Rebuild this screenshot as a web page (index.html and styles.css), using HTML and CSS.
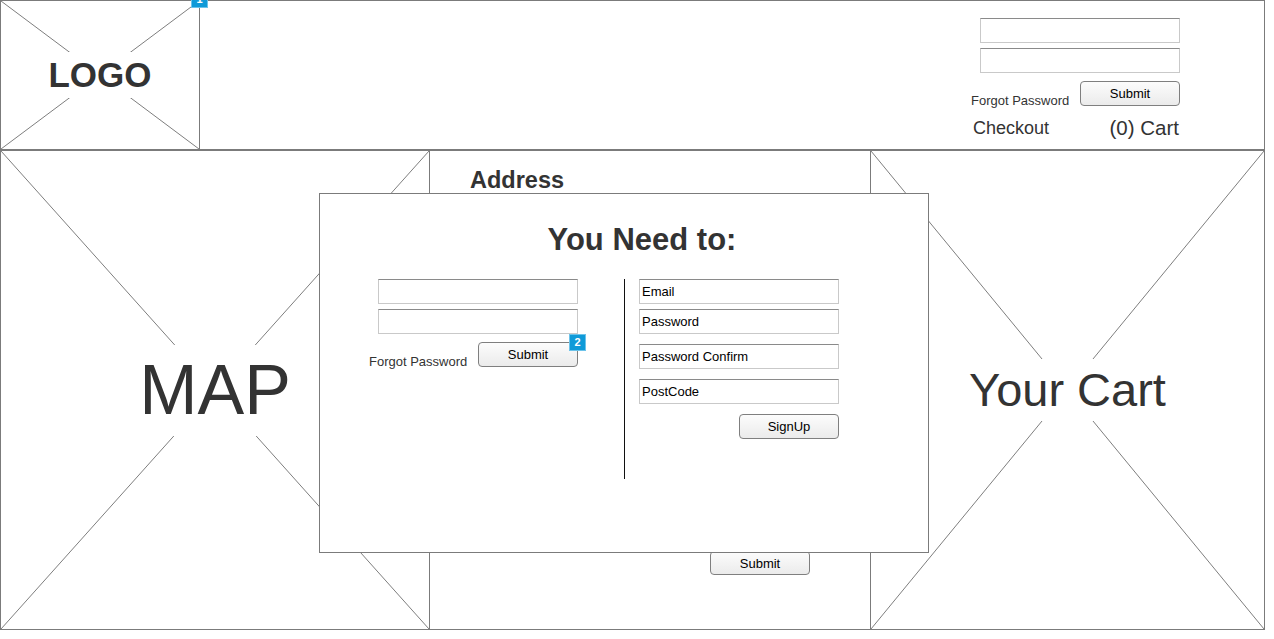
FILE: index.html
```html
<!DOCTYPE html>
<html lang="en">
<head>
<meta charset="utf-8">
<title>Wireframe</title>
<link rel="stylesheet" href="styles.css">
</head>
<body>
<div class="page">
  <header class="top">
    <div class="ph logo-box">
      <svg class="ph-x" xmlns="http://www.w3.org/2000/svg"><line x1="0" y1="0" x2="100%" y2="100%"/><line x1="100%" y1="0" x2="0" y2="100%"/></svg>
      <span class="ph-label logo-label">LOGO</span>
      <span class="badge badge-logo">1</span>
    </div>
    <div class="login">
      <div class="field"></div>
      <div class="field"></div>
      <div class="login-row">
        <span class="forgot">Forgot Password</span>
        <button class="btn">Submit</button>
      </div>
      <div class="links">
        <span class="checkout">Checkout</span>
        <span class="cart-link">(0) Cart</span>
      </div>
    </div>
  </header>

  <main class="content">
    <div class="ph map-box">
      <svg class="ph-x" xmlns="http://www.w3.org/2000/svg"><line x1="0" y1="0" x2="100%" y2="100%"/><line x1="100%" y1="0" x2="0" y2="100%"/></svg>
      <span class="ph-label map-label">MAP</span>
    </div>
    <section class="address">
      <h2 class="address-title">Address</h2>
      <button class="btn address-submit">Submit</button>
    </section>
    <div class="ph cart-box">
      <svg class="ph-x" xmlns="http://www.w3.org/2000/svg"><line x1="0" y1="0" x2="100%" y2="100%"/><line x1="100%" y1="0" x2="0" y2="100%"/></svg>
      <span class="ph-label cart-label">Your Cart</span>
    </div>
  </main>

  <div class="modal">
    <h1 class="modal-title">You Need to:</h1>
    <div class="modal-body">
      <div class="login login-modal">
        <div class="field"></div>
        <div class="field"></div>
        <div class="login-row">
          <span class="forgot">Forgot Password</span>
          <button class="btn btn-badged">Submit<span class="badge badge-btn">2</span></button>
        </div>
      </div>
      <div class="divider"></div>
      <div class="signup">
        <div class="field">Email</div>
        <div class="field">Password</div>
        <div class="field gap">Password Confirm</div>
        <div class="field gap">PostCode</div>
        <button class="btn signup-btn">SignUp</button>
      </div>
    </div>
  </div>
</div>
</body>
</html>
```

FILE: styles.css
```css
* { box-sizing: border-box; }

body {
  margin: 0;
  background: #fff;
  font-family: "Liberation Sans", Arial, sans-serif;
  color: #333;
}

.page {
  position: relative;
  width: 1265px;
  height: 630px;
}

/* ---------- header ---------- */
.top {
  display: flex;
  justify-content: space-between;
  height: 150px;
  border: 1px solid #7b7b7b;
}

.ph {
  position: relative;
  display: flex;
  align-items: center;
  justify-content: center;
}

.ph-x {
  position: absolute;
  inset: 0;
  width: 100%;
  height: 100%;
}

.ph-x line {
  stroke: #7e7e7e;
  stroke-width: 1;
}

.ph-label {
  position: relative;
  background: #fff;
  color: #333;
  line-height: 1.3;
}

.logo-box {
  width: 199px;
  border-right: 1px solid #7b7b7b;
}

.logo-label {
  font-size: 35px;
  font-weight: bold;
}

.badge {
  position: absolute;
  width: 17px;
  height: 17px;
  background: #0f9ad8;
  border: 1px solid #6cc3ea;
  color: #fff;
  font-size: 11px;
  font-weight: bold;
  line-height: 15px;
  text-align: center;
}

.badge-logo {
  top: -10px;
  right: -9px;
}

/* login block */
.login {
  display: flex;
  flex-direction: column;
  align-items: flex-end;
  width: 209px;
  margin-right: 84px;
  padding-top: 17px;
}

.field {
  width: 200px;
  height: 25px;
  border: 1px solid #c9c9c9;
  border-top-color: #8a8a8a;
  background: #fff;
  font-size: 13px;
  line-height: 23px;
  color: #000;
  padding-left: 2px;
}

.field + .field { margin-top: 5px; }
.field.gap { margin-top: 10px; }

.login-row {
  display: flex;
  align-items: flex-end;
  justify-content: space-between;
  width: 100%;
  margin-top: 8px;
}

.forgot {
  font-size: 13px;
  line-height: 16px;
  margin-bottom: -3px;
  color: #333;
}

.btn {
  position: relative;
  width: 100px;
  height: 25px;
  padding: 0;
  border: 1px solid #7f7f7f;
  border-radius: 4px;
  background: linear-gradient(#fcfcfc, #ebebeb);
  font-family: "Liberation Sans", Arial, sans-serif;
  font-size: 13px;
  color: #000;
}

.links {
  display: flex;
  align-items: center;
  justify-content: space-between;
  width: 100%;
  margin-top: 11px;
  padding-left: 2px;
}

.checkout {
  font-size: 18px;
  line-height: 22px;
}

.cart-link {
  font-size: 20.5px;
  line-height: 22px;
  margin-right: 1px;
}

/* ---------- content ---------- */
.content {
  display: flex;
  height: 480px;
}

.content > * {
  height: 480px;
  border: 1px solid #7b7b7b;
}

.map-box { width: 430px; }

.map-label { font-size: 70px; }

.address {
  width: 442px;
  margin-left: -1px;
  padding-left: 40px;
  display: flex;
  flex-direction: column;
  align-items: flex-start;
}

.address-title {
  margin: 16px 0 0;
  font-size: 23.5px;
  line-height: 26px;
  font-weight: bold;
  color: #333;
}

.address-submit {
  height: 24px;
  margin-top: 358px;
  margin-left: 240px;
}

.cart-box {
  width: 395px;
  margin-left: -1px;
}

.cart-label { font-size: 47px; }

/* ---------- modal ---------- */
.modal {
  position: absolute;
  left: 319px;
  top: 193px;
  width: 610px;
  height: 360px;
  border: 1px solid #7b7b7b;
  background: #fff;
}

.modal-title {
  margin: 0;
  padding: 28px 0 0 36px;
  font-size: 31px;
  line-height: 36px;
  font-weight: bold;
  text-align: center;
  color: #333;
}

.modal-body {
  display: flex;
  align-items: flex-start;
  margin-top: 21px;
  padding-left: 49px;
}

.login-modal {
  margin-right: 0;
  padding-top: 0;
}

.divider {
  width: 1px;
  height: 200px;
  margin-left: 46px;
  background: #111;
}

.signup {
  display: flex;
  flex-direction: column;
  align-items: flex-end;
  width: 200px;
  margin-left: 14px;
}

.signup-btn { margin-top: 10px; }

.badge-btn {
  top: -9px;
  right: -9px;
}
```
